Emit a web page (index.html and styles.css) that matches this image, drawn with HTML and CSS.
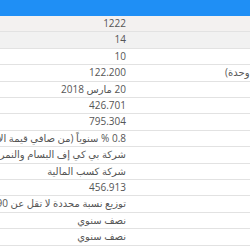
FILE: index.html
```html
<!DOCTYPE html>
<html lang="ar">
<head>
<meta charset="utf-8">
<link rel="stylesheet" href="styles.css">
</head>
<body>
<div class="viewport">
  <table class="fund-table">
    <thead>
      <tr><th class="lbl">معلومات الصندوق</th><th class="val"></th></tr>
    </thead>
    <tbody>
      <tr class="shade1"><td class="lbl">رمز الصندوق</td><td class="val">1222</td></tr>
      <tr class="shade2"><td class="lbl">سعر الوحدة</td><td class="val">14</td></tr>
      <tr><td class="lbl">سعر الوحدة عند الطرح</td><td class="val">10</td></tr>
      <tr><td class="lbl">صافي قيمة الأصول (مليون وحدة)</td><td class="val">122.200</td></tr>
      <tr><td class="lbl">تاريخ التقييم</td><td class="val">20 مارس 2018</td></tr>
      <tr><td class="lbl">عدد الوحدات</td><td class="val">426.701</td></tr>
      <tr><td class="lbl">حجم الصندوق</td><td class="val">795.304</td></tr>
      <tr><td class="lbl">رسوم الإدارة</td><td class="val">0.8 % سنوياً (من صافي قيمة الأصول بعد خصم المصاريف)</td></tr>
      <tr><td class="lbl">المحاسب</td><td class="val">شركة بي كي إف البسام والنمر المحاسبون المتحالفون</td></tr>
      <tr><td class="lbl">مدير الصندوق</td><td class="val">شركة كسب المالية</td></tr>
      <tr><td class="lbl">عدد المشتركين</td><td class="val">456.913</td></tr>
      <tr><td class="lbl">سياسة التوزيع</td><td class="val">توزيع نسبة محددة لا تقل عن 90% من صافي الأرباح</td></tr>
      <tr><td class="lbl">التقييم</td><td class="val">نصف سنوي</td></tr>
      <tr><td class="lbl">التوزيع</td><td class="val">نصف سنوي</td></tr>
    </tbody>
  </table>
</div>
</body>
</html>
```

FILE: styles.css
```css
html, body {
  margin: 0;
  padding: 0;
  background: #ffffff;
}

.viewport {
  width: 250px;
  height: 250px;
  overflow: hidden;
}

.fund-table {
  direction: rtl;
  margin-left: -150px;
  width: 514px;
  border-collapse: collapse;
  table-layout: fixed;
  font-family: "Open Sans", "DejaVu Sans", sans-serif;
  font-size: 10px;
  color: #555555;
}

.fund-table th {
  background: #1f8ff5;
  height: 16px;
  padding: 0 6px;
  color: #ffffff;
  font-weight: normal;
  text-align: right;
}

.fund-table td {
  height: 15.4px;
  line-height: 15.4px;
  padding: 0 6px;
  border-bottom: 1px solid #e2e2e2;
  white-space: nowrap;
  text-align: right;
}

.fund-table .val {
  width: 268px;
}

.fund-table td.val {
  padding-right: 4px;
  padding-left: 6px;
}

.fund-table .lbl {
  width: 224px;
}

.shade1 td {
  background: #f3f1f0;
}

.shade2 td {
  background: #f1f1f1;
}
```
